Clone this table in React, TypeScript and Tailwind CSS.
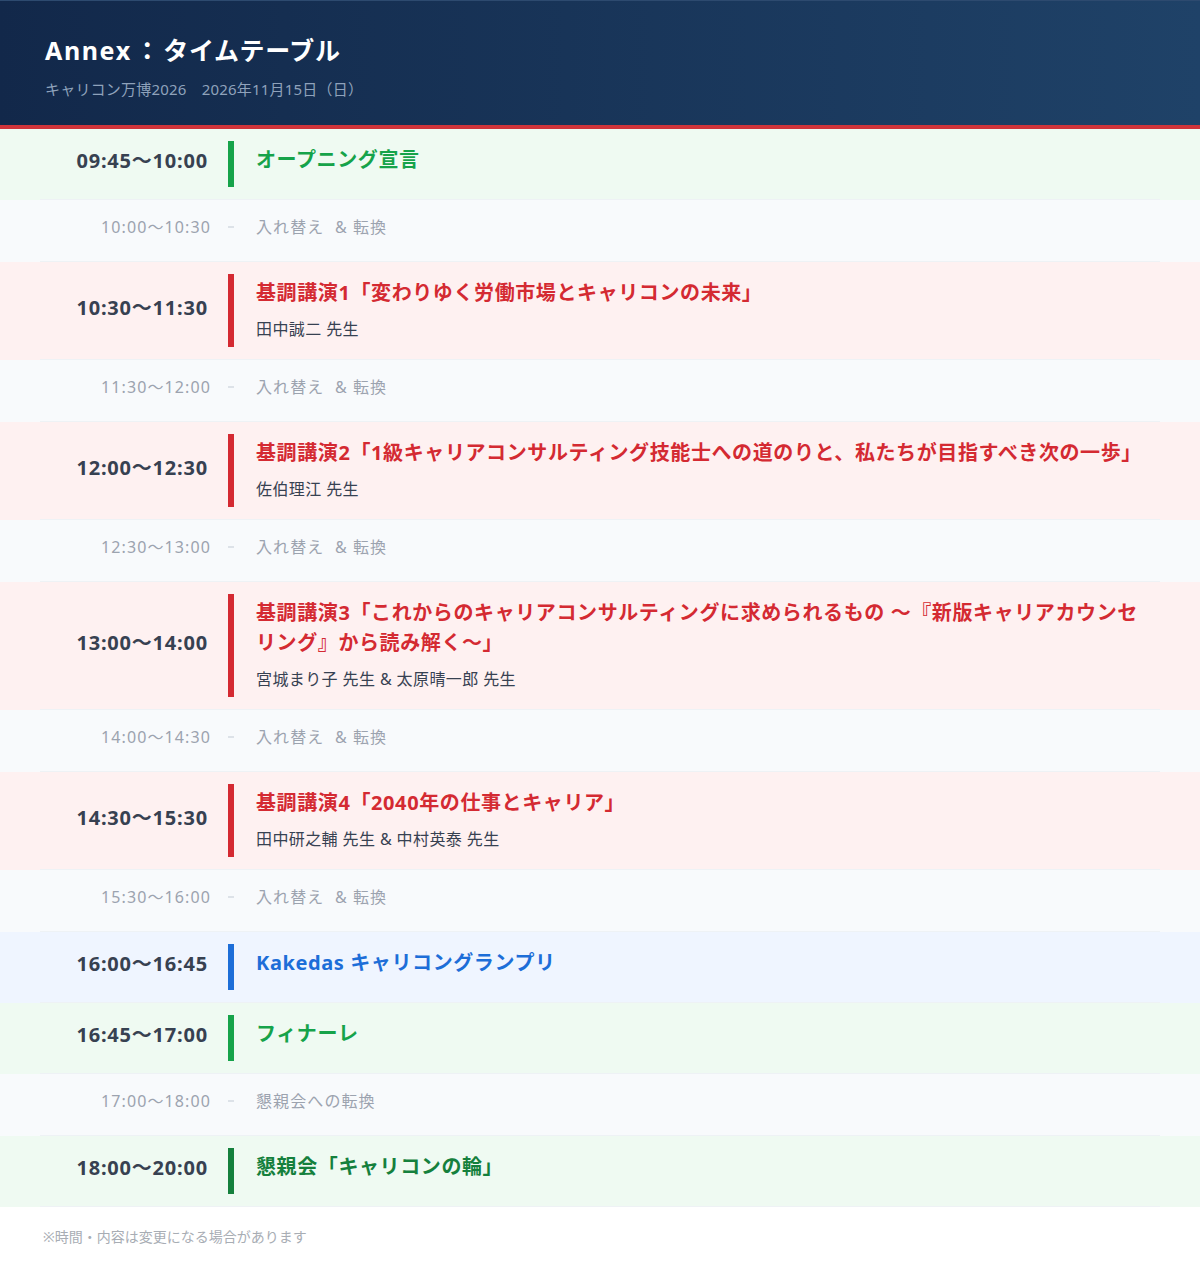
import React from "react";

type Kind = "green" | "red" | "blue" | "dark";

type Item =
  | { type: "main"; time: string; title: string; speaker?: string; kind: Kind }
  | { type: "filler"; time: string; text: string };

const SWAP = "入れ替え\u00a0 & 転換";

const items: Item[] = [
  { type: "main", time: "09:45〜10:00", title: "オープニング宣言", kind: "green" },
  { type: "filler", time: "10:00〜10:30", text: SWAP },
  {
    type: "main",
    time: "10:30〜11:30",
    title: "基調講演1「変わりゆく労働市場とキャリコンの未来」",
    speaker: "田中誠二 先生",
    kind: "red",
  },
  { type: "filler", time: "11:30〜12:00", text: SWAP },
  {
    type: "main",
    time: "12:00〜12:30",
    title: "基調講演2「1級キャリアコンサルティング技能士への道のりと、私たちが目指すべき次の一歩」",
    speaker: "佐伯理江 先生",
    kind: "red",
  },
  { type: "filler", time: "12:30〜13:00", text: SWAP },
  {
    type: "main",
    time: "13:00〜14:00",
    title: "基調講演3「これからのキャリアコンサルティングに求められるもの ～『新版キャリアカウンセリング』から読み解く～」",
    speaker: "宮城まり子 先生 & 太原晴一郎 先生",
    kind: "red",
  },
  { type: "filler", time: "14:00〜14:30", text: SWAP },
  {
    type: "main",
    time: "14:30〜15:30",
    title: "基調講演4「2040年の仕事とキャリア」",
    speaker: "田中研之輔 先生 & 中村英泰 先生",
    kind: "red",
  },
  { type: "filler", time: "15:30〜16:00", text: SWAP },
  { type: "main", time: "16:00〜16:45", title: "Kakedas キャリコングランプリ", kind: "blue" },
  { type: "main", time: "16:45〜17:00", title: "フィナーレ", kind: "green" },
  { type: "filler", time: "17:00〜18:00", text: "懇親会への転換" },
  { type: "main", time: "18:00〜20:00", title: "懇親会「キャリコンの輪」", kind: "dark" },
];

const styles: Record<Kind, { bg: string; bar: string; text: string }> = {
  green: { bg: "bg-[#effaf2]", bar: "border-[#16a34a]", text: "text-[#16a34a]" },
  red: { bg: "bg-[#fef1f1]", bar: "border-[#d42a32]", text: "text-[#d42a32]" },
  blue: { bg: "bg-[#eff5ff]", bar: "border-[#1d6ed8]", text: "text-[#1d6ed8]" },
  dark: { bg: "bg-[#effaf2]", bar: "border-[#15803d]", text: "text-[#15803d]" },
};

function MainRow({ item }: { item: Extract<Item, { type: "main" }> }) {
  const s = styles[item.kind];
  return (
    <div className={s.bg}>
      <div className="mx-10 flex items-center border-b border-[#eef2f5] py-3">
        <div className="w-[168px] shrink-0 pb-[6px] text-right text-[20px] font-bold leading-[30px] tracking-[0.8px] text-[#374151]">
          {item.time}
        </div>
        <div className={`ml-5 flex-1 border-l-[6px] ${s.bar} py-1 pl-[22px] pr-2`}>
          <div className={`mb-2 text-[20px] font-bold leading-[30px] tracking-[0.6px] ${s.text}`}>
            {item.title}
          </div>
          {item.speaker && (
            <div className="text-[16px] leading-[27px] tracking-[0.4px] text-[#374151]">{item.speaker}</div>
          )}
        </div>
      </div>
    </div>
  );
}

function FillerRow({ item }: { item: Extract<Item, { type: "filler" }> }) {
  return (
    <div className="bg-[#f8fafc]">
      <div className="mx-10 flex items-center border-b border-[#eef2f5] pb-[19px] pt-[12px]">
        <div className="w-[171px] shrink-0 text-right text-[16px] leading-[30px] tracking-[1.1px] text-[#9ca3af]">
          {item.time}
        </div>
        <div className="ml-[17px] h-[2px] w-[6px] shrink-0 bg-[#dde2e8]" />
        <div className="pl-[22px] text-[16px] leading-[30px] tracking-[1.1px] text-[#9ca3af]">{item.text}</div>
      </div>
    </div>
  );
}

export default function App() {
  return (
    <div className="min-h-[1268px] bg-white font-['Noto_Sans','Noto_Sans_CJK_JP',sans-serif]">
      <header className="border-b-4 border-t border-[#d0343a] border-t-[#2d4a6f] bg-linear-to-r from-[#12284a] to-[#1f4268] px-[45px] pb-[25px] pt-[29px]">
        <h1 className="text-[25px] font-bold leading-[40px] tracking-[0.6px] text-white">
          <span className="tracking-[1.6px]">Annex</span>
          <span className="mx-[3px]">：</span>タイムテーブル
        </h1>
        <p className="mt-[8px] text-[15px] leading-[22px] tracking-[0.2px] text-[#8fa2bb]">
          キャリコン万博2026　2026年11月15日（日）
        </p>
      </header>
      <main>
        {items.map((it, i) =>
          it.type === "main" ? <MainRow key={i} item={it} /> : <FillerRow key={i} item={it} />
        )}
      </main>
      <p className="px-[43px] pt-[20px] text-[14px] leading-[20px] text-[#a8adb4]">
        ※時間・内容は変更になる場合があります
      </p>
    </div>
  );
}
